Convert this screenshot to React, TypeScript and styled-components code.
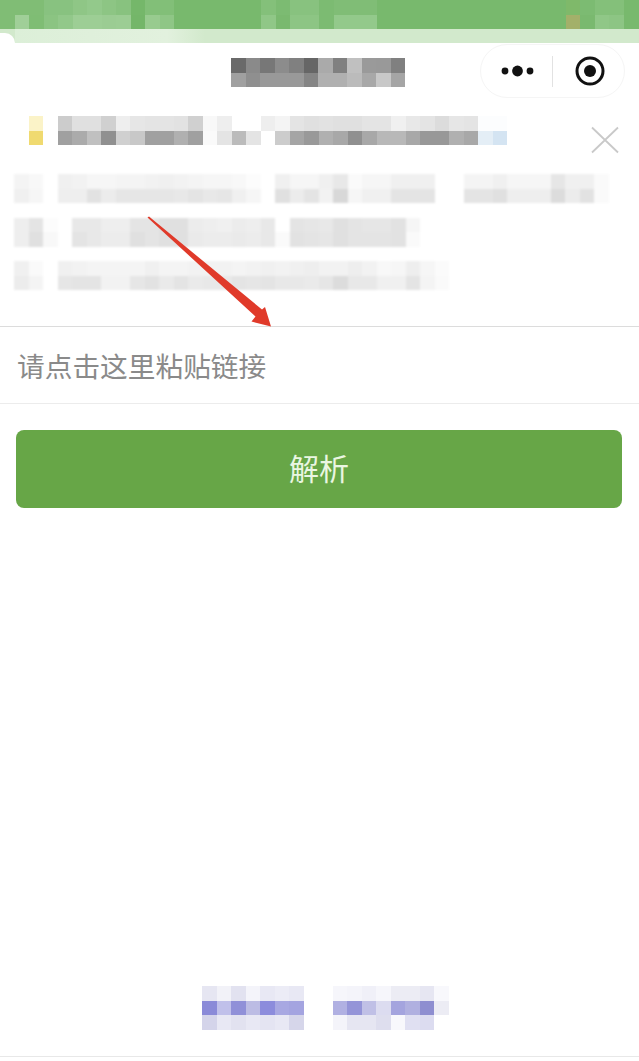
import styled, { createGlobalStyle } from "styled-components";

const GlobalStyle = createGlobalStyle`
  html, body {
    margin: 0;
    padding: 0;
    background: #fff;
    overflow: hidden;
  }
  body {
    font-family: "Noto Sans CJK SC", "Noto Sans", sans-serif;
  }
`;

// two digits = grey level, six digits = full colour
const toColor = (token: string) =>
  token.length === 2 ? `#${token}${token}${token}` : `#${token}`;

const greenBand = [
  "80bd75 80bd75 80bd75 88c280 88c280 8fc686 93c98b 8dc584 88c27f 75b76a 82bf78 82bf78 78b96d 78b96d 78b96d 78b96d 78b96d 78b96d 84c07a 7cbb72 88c27f 88c27f 7cbb72 80bd76 80bd76 80bd76 78b96d 78b96d 78b96d 78b96d 78b96d 78b96d 78b96d 78b96d 78b96d 78b96d 78b96d 78b96d 78b96d 7fb96a 7cbb72 84c07a 84c07a 78b96d 78b96d",
  "80bd75 a0cf98 7fbd74 8bc482 92c88a 9dce95 9dce95 9bcc93 9ccd94 74b669 98cb8f 8fc686 78b96d 78b96d 78b96d 78b96d 78b96d 78b96d 90c787 7ab96f 8dc584 8dc584 7cbb72 93c98b 93c98b 93c98b 78b96d 78b96d 78b96d 78b96d 78b96d 78b96d 78b96d 78b96d 78b96d 78b96d 78b96d 78b96d 78b96d a3b06a 7ab96f 90c787 8dc584 78b96d 78b96d",
];

const titleBlock = [
  "6a 8a 77 8c 80 66 aa 80 c0 9a 99 80",
  "a0 8f 99 99 99 85 b0 b0 bb a8 c8 a5",
];

const noticeLines = [
  {
    gap: 0,
    soft: false,
    rows: [
      "ff fbf3c8 ff cc e0 e0 d0 ee e6 e4 e4 e2 d0 f8 ee ff ff ee f4 e4 e0 e2 e0 e0 e4 e4 f0 e8 e4 dc e6 e4 fcfdfe fcfdfe",
      "ff f0da70 ff a0 ab c0 90 d0 c8 a0 a0 b0 a0 fa e4 bb e4 ff cc a5 99 b0 a8 90 a8 b8 b8 a8 98 98 b0 a8 e4eef6 d4e4f2",
    ],
  },
  {
    gap: 29,
    soft: true,
    rows: [
      "f4 f8 ff f0 f2 f6 f6 f4 f4 f2 f0 f2 f4 f6 f6 f8 fc ff f0 f6 f6 f0 e8 fa f6 f6 f0 f0 f0 ff ff f4 f4 f0 f6 f6 f6 e6 f0 f0 fa",
      "f0 f6 ff ee ee e2 ec e6 e6 e6 e6 e8 e4 e8 e6 f0 f6 ff e0 ec e4 f2 d8 f6 f0 f0 e4 e4 e4 ff ff e4 e4 e0 ee ee ee dc ec e2 fa",
    ],
  },
  {
    gap: 14.5,
    soft: true,
    rows: [
      "ee e4 fc ff e8 e8 ee ee e4 e4 e0 e0 ec ee f0 ec ee e8 ff e4 e6 e8 e0 e4 e6 e6 e2 f6",
      "ee e0 f8 ff e4 e8 ec ec e0 e4 e0 e0 ea ec ec ea ec e8 fa e2 e4 e6 e0 e4 e4 e4 e2 fa",
    ],
  },
  {
    gap: 14.5,
    soft: true,
    rows: [
      "f0 fa ff f0 f2 f4 f4 f4 f4 f0 f4 f4 f2 f2 f2 f4 f2 f0 f2 f0 ee f2 f2 ee f2 f8 f6 ee f6 fb",
      "ec f4 ff e6 e4 e4 f2 f2 e6 e2 ea e4 ea e8 e8 e4 e6 e4 e8 e8 ea e6 dc e8 e8 f0 f0 e4 f4 fa",
    ],
  },
];

const footerLeft = [
  "e6e6f2 f2f2f8 e2e2f0 f4f4fa e8e8f4 ececf6 e8e8f4",
  "8a8ad8 c0c0ea 9090d8 bcbce4 8c8cdc a8a8e2 a4a4e0",
  "d4d4ea e8e8f4 e2e2f0 e8e8f4 e4e4f2 e8e8f4 d6d6ea",
];

const footerRight = [
  "f6f6fb f4f4fa f0f0f8 f6f6fb ececf4 ececf4 e6e6f2 f8f8fc",
  "b0b0e2 9494d8 c0c0e6 dcdcf0 a4a4de b0b0e0 8e8ed0 ececf4",
  "f4f4fa e6e6f2 e6e6f2 dedeee f8f8fc e0e0f2 dcdcf0 ffffff",
];

const Mosaic = ({ rows }: { rows: string[] }) => (
  <MosaicGrid>
    {rows.map((row, r) => (
      <MosaicRow key={r}>
        {row.split(" ").map((token, c) => (
          <MosaicCell key={c} $color={toColor(token)} />
        ))}
      </MosaicRow>
    ))}
  </MosaicGrid>
);

const App = () => {
  return (
    <Page>
      <GlobalStyle />
      <TopBand>
        <Mosaic rows={greenBand} />
      </TopBand>
      <PaleBand>
        <PaleCorner />
        <PaleTint />
      </PaleBand>
      <NavBar>
        <Mosaic rows={titleBlock} />
        <Capsule>
          <CapsuleSide>
            <svg width="42" height="14" viewBox="0 0 42 14">
              <circle cx="8" cy="7" r="3.4" fill="#111" />
              <circle cx="20.5" cy="7" r="5.4" fill="#111" />
              <circle cx="33" cy="7" r="3.4" fill="#111" />
            </svg>
          </CapsuleSide>
          <CapsuleDivider />
          <CapsuleSide>
            <svg width="32" height="32" viewBox="0 0 32 32">
              <circle cx="16" cy="16" r="13" fill="none" stroke="#111" strokeWidth="3" />
              <circle cx="16" cy="16" r="6" fill="#111" />
            </svg>
          </CapsuleSide>
        </Capsule>
      </NavBar>
      <Notice>
        {noticeLines.map((line, i) => (
          <NoticeLine key={i} $gap={line.gap} $soft={line.soft}>
            <Mosaic rows={line.rows} />
          </NoticeLine>
        ))}
        <CloseIcon width="30" height="28" viewBox="0 0 30 28">
          <path d="M2 1.5 L28 26.5 M28 1.5 L2 26.5" stroke="#c9c9c9" strokeWidth="1.8" fill="none" />
        </CloseIcon>
        <ArrowMark width="130" height="116" viewBox="0 0 130 116">
          <path d="M3 0.5 L116 93.5 L119 91 L125 110.5 L105.5 105.5 L109.5 100.5 L1.5 1.5 Z" fill="#e03a2a" />
        </ArrowMark>
      </Notice>
      <LinkField>请点击这里粘贴链接</LinkField>
      <ParseButton>解析</ParseButton>
      <Footer>
        <FooterLinks>
          <Mosaic rows={footerLeft} />
          <Mosaic rows={footerRight} />
        </FooterLinks>
      </Footer>
    </Page>
  );
};

export default App;

const Page = styled.div`
  display: flex;
  flex-direction: column;
  width: 639px;
  height: 1061px;
  background: #fff;
  overflow: hidden;
`;

const MosaicGrid = styled.div`
  display: flex;
  flex-direction: column;
  flex-shrink: 0;
`;

const MosaicRow = styled.div`
  display: flex;
`;

const MosaicCell = styled.div<{ $color: string }>`
  width: 14.5px;
  height: 14.5px;
  flex-shrink: 0;
  background: ${({ $color }) => $color};
`;

const TopBand = styled.div`
  height: 29px;
  overflow: hidden;
  filter: blur(0.6px);
`;

const PaleBand = styled.div`
  position: relative;
  height: 14px;
  background: #d2e9cc;
`;

const PaleCorner = styled.div`
  position: absolute;
  left: 0;
  top: 4px;
  width: 15px;
  height: 10px;
  background: #fff;
  border-top-right-radius: 10px;
`;

const PaleTint = styled.div`
  position: absolute;
  left: 15px;
  top: 0;
  width: 190px;
  height: 14px;
  background: linear-gradient(90deg, #dcefd8, #e2f1de 80%, #d2e9cc);
`;

const NavBar = styled.div`
  position: relative;
  display: flex;
  justify-content: center;
  height: 58px;
  padding: 15px 3px 0 0;
  box-sizing: border-box;
  margin-bottom: 15px;
`;

const Capsule = styled.div`
  position: absolute;
  left: 480px;
  top: 1px;
  width: 145px;
  height: 54px;
  display: flex;
  align-items: center;
  box-sizing: border-box;
  border: 1px solid #f5f5f5;
  border-radius: 27px;
`;

const CapsuleSide = styled.div`
  flex: 1;
  display: flex;
  justify-content: center;
  align-items: center;
  padding-left: 2px;
`;

const CapsuleDivider = styled.div`
  width: 1px;
  height: 31px;
  background: #e2e2e2;
`;

const Notice = styled.div`
  position: relative;
  padding: 0 0 36px 14px;
`;

const NoticeLine = styled.div<{ $gap: number; $soft: boolean }>`
  margin-top: ${({ $gap }) => $gap}px;
  filter: ${({ $soft }) => ($soft ? "blur(1.2px)" : "blur(0.4px)")};
`;

const CloseIcon = styled.svg`
  position: absolute;
  left: 590px;
  top: 10px;
`;

const ArrowMark = styled.svg`
  position: absolute;
  left: 146px;
  top: 100px;
`;

const LinkField = styled.div`
  height: 78px;
  display: flex;
  align-items: center;
  padding-left: 17px;
  box-sizing: border-box;
  border-top: 1px solid #dcdcdc;
  border-bottom: 1px solid #ececec;
  color: #8a8a8a;
  font-size: 27.7px;
  font-weight: 400;
  white-space: nowrap;
`;

const ParseButton = styled.div`
  height: 78px;
  margin: 26px 17px 0 16px;
  padding-bottom: 4px;
  box-sizing: border-box;
  display: flex;
  align-items: center;
  justify-content: center;
  background: #67a647;
  border-radius: 8px;
  color: #eaf6e2;
  font-size: 30px;
  font-weight: 400;
`;

const Footer = styled.div`
  margin-top: auto;
  height: 71px;
  box-sizing: border-box;
  margin-bottom: 4px;
  border-bottom: 1px solid #e8e8e8;
`;

const FooterLinks = styled.div`
  display: flex;
  gap: 29px;
  padding-left: 202px;
  filter: blur(0.5px);
`;
